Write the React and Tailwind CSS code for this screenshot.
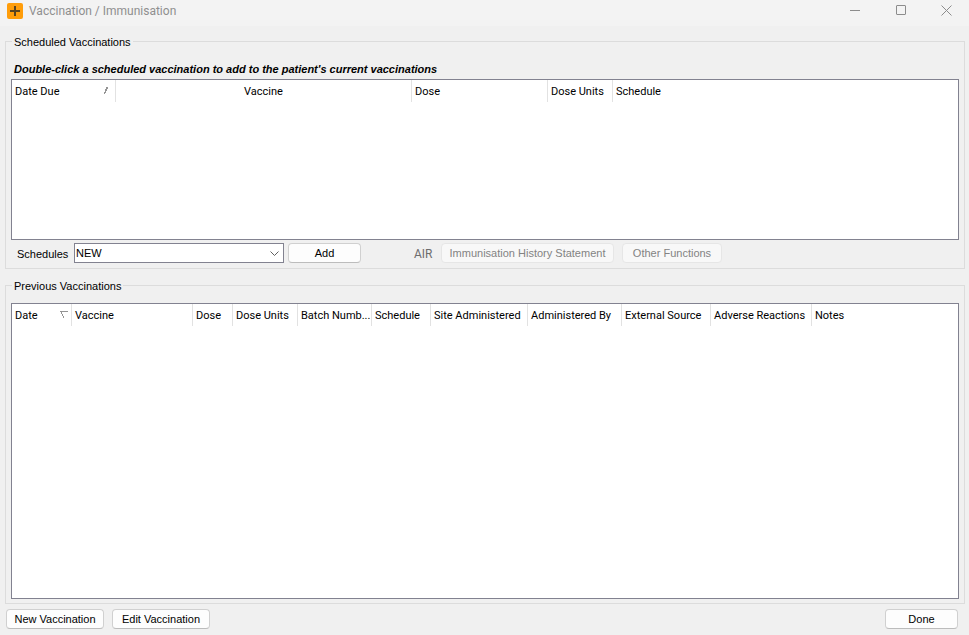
import { useState } from "react";

const scheduledColumns = [
  { label: "Date Due", width: "w-[104px]", sort: "asc" },
  { label: "Vaccine", width: "w-[296px]", align: "text-center" },
  { label: "Dose", width: "w-[136px]" },
  { label: "Dose Units", width: "w-[65px]" },
  { label: "Schedule" },
];

const previousColumns = [
  { label: "Date", width: "w-[60px]", sort: "desc" },
  { label: "Vaccine", width: "w-[121px]" },
  { label: "Dose", width: "w-[40px]" },
  { label: "Dose Units", width: "w-[65px]" },
  { label: "Batch Numb...", width: "w-[74px]" },
  { label: "Schedule", width: "w-[59px]" },
  { label: "Site Administered", width: "w-[97px]" },
  { label: "Administered By", width: "w-[94px]" },
  { label: "External Source", width: "w-[89px]" },
  { label: "Adverse Reactions", width: "w-[101px]" },
  { label: "Notes" },
];

function SortMark({ direction }) {
  return (
    <svg width="8" height="8" viewBox="0 0 8 8" fill="#949494" shapeRendering="crispEdges" aria-hidden="true">
      {direction === "asc" ? (
        <path d="M2 0H4V2H3V4H2V6H1V7H0V5H1V2H2Z" />
      ) : (
        <path d="M0 0H8V1H0ZM1 1H2V3H3V5H4V7H3V5H2V3H1Z" />
      )}
    </svg>
  );
}

function ListTable({ label, columns, className }) {
  return (
    <div className={`border border-[#828290] bg-white ${className}`}>
      <table aria-label={label} className="w-full table-fixed border-collapse font-[Roboto,sans-serif] text-[11px] leading-4">
        <thead>
          <tr>
            {columns.map((col, i) => (
              <th
                key={col.label}
                scope="col"
                className={`h-[22px] p-0 font-normal ${col.width || ""} ${col.align || "text-left"}`}
              >
                <div
                  className={`flex h-[22px] items-center px-[3px] whitespace-nowrap ${
                    i < columns.length - 1 ? "border-r border-[#e2e2e2]" : ""
                  }`}
                >
                  <span className="flex-1 pt-[2px]">{col.label}</span>
                  {col.sort && <SortMark direction={col.sort} />}
                </div>
              </th>
            ))}
          </tr>
        </thead>
        <tbody></tbody>
      </table>
    </div>
  );
}

function Group({ title, className, children }) {
  return (
    <section aria-label={title} className={`mt-2 mr-1 ml-[5px] flex flex-col border border-[#dcdcdc] px-[5px] ${className || ""}`}>
      <h2 className="-mt-2 ml-px w-fit bg-[#f0f0f0] px-[2px] leading-4">{title}</h2>
      {children}
    </section>
  );
}

function Button({ className, ...props }) {
  return (
    <button
      type="button"
      className={`rounded border border-[#d0d0d0] border-b-[#bcbcbc] bg-[#fdfdfd] leading-4 whitespace-nowrap disabled:border-[#e6e6e6] disabled:bg-[#f8f8f8] disabled:text-[#838383] ${className}`}
      {...props}
    />
  );
}

function TitleBar() {
  return (
    <header className="flex h-[26px] items-start bg-[#f3f3f3]">
      <div className="flex h-[22px] flex-1 items-center gap-[6px] pl-[7px]">
        <svg width="16" height="16" viewBox="0 0 16 16" aria-hidden="true">
          <rect width="16" height="16" rx="2" fill="#ff9d0a" />
          <path d="M8 3V13M3 8H13" stroke="#5a4420" strokeWidth="2" />
        </svg>
        <h1 className="font-[Roboto,sans-serif] text-[12px] leading-4 text-[#8f8f8f]">
          Vaccination / Immunisation
        </h1>
      </div>
      <button type="button" aria-label="Minimize" className="flex h-[21px] w-[46px] items-center justify-center">
        <svg width="11" height="11" viewBox="0 0 11 11" stroke="#8c8c8c"><path d="M1 5.5H11" /></svg>
      </button>
      <button type="button" aria-label="Maximize" className="flex h-[21px] w-[46px] items-center justify-center">
        <svg width="11" height="11" viewBox="0 0 11 11" stroke="#8c8c8c" fill="none">
          <rect x="1.5" y="0.5" width="9" height="9" rx="0.5" />
        </svg>
      </button>
      <button type="button" aria-label="Close" className="flex h-[21px] w-[46px] items-center justify-center">
        <svg width="11" height="11" viewBox="0 0 11 11" stroke="#8c8c8c"><path d="M0.5 0.5L10.5 10.5M10.5 0.5L0.5 10.5" /></svg>
      </button>
    </header>
  );
}

export default function App() {
  const [schedule, setSchedule] = useState("NEW");

  return (
    <div className="flex min-h-screen flex-col bg-[#f0f0f0] font-['Liberation_Sans',Arial,sans-serif] text-[11px] text-black">
      <TitleBar />

      <main className="flex flex-1 flex-col gap-2 pt-[7px]">
        <Group title="Scheduled Vaccinations" className="pb-[5px]">
          <p className="pt-[11px] pb-[2px] pl-[3px] leading-4 font-bold italic">
            Double-click a scheduled vaccination to add to the patient's current vaccinations
          </p>
          <ListTable label="Scheduled Vaccinations" columns={scheduledColumns} className="h-[161px]" />

          <div className="flex items-center pt-[3px]">
            <label htmlFor="schedules" className="w-[63px] pt-[2px] pl-[6px] leading-4">
              Schedules
            </label>
            <div className="relative w-[210px]">
              <select
                id="schedules"
                value={schedule}
                onChange={(e) => setSchedule(e.target.value)}
                className="block h-5 w-full appearance-none border border-[#828290] bg-white pl-px leading-4"
              >
                <option>NEW</option>
              </select>
              <svg
                className="pointer-events-none absolute top-[8px] right-1"
                width="10"
                height="6"
                viewBox="0 0 10 6"
                fill="none"
                stroke="#606060"
              >
                <path d="M0.5 0.5L4.5 4.5L8.5 0.5" />
              </svg>
            </div>
            <Button className="ml-1 h-5 w-[73px]">Add</Button>
            <span className="ml-[53px] w-[27px] pt-[2px] font-[Roboto,sans-serif] text-[12px] leading-4 text-[#6d6d6d]">AIR</span>
            <Button className="h-5 w-[173px]" disabled>Immunisation History Statement</Button>
            <Button className="ml-2 h-5 w-[100px]" disabled>Other Functions</Button>
          </div>
        </Group>

        <Group title="Previous Vaccinations" className="flex-1 pb-1">
          <ListTable label="Previous Vaccinations" columns={previousColumns} className="mt-[9px] flex-1" />
        </Group>
      </main>

      <footer className="flex gap-2 px-[6px] pt-[5px] pb-[6px]">
        <Button className="h-5 w-[98px]">New Vaccination</Button>
        <Button className="h-5 w-[98px]">Edit Vaccination</Button>
        <Button className="mr-[5px] ml-auto h-5 w-[73px]">Done</Button>
      </footer>
    </div>
  );
}
